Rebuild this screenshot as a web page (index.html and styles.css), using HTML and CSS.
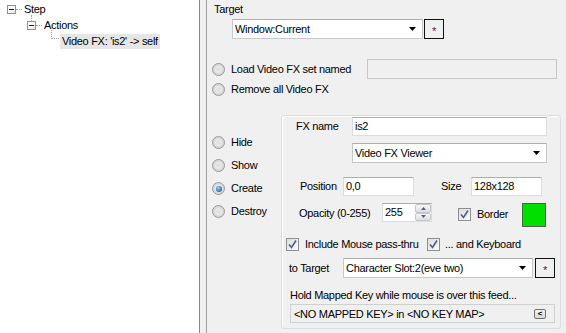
FILE: index.html
```html
<!DOCTYPE html>
<html lang="en">

<head>
    <meta charset="UTF-8">
    <title>Video FX</title>
    <link rel="stylesheet" href="styles.css">
</head>

<body>
    <div class="app">
        <div class="tree">
            <div class="node lvl0">
                <span class="exp"><i></i></span><span class="hdots"></span><span class="label">Step</span>
            </div>
            <div class="node lvl1">
                <span class="exp up"><i></i></span><span class="hdots"></span><span class="label">Actions</span>
            </div>
            <div class="node lvl2">
                <span class="elbow"></span><span class="label sel">Video FX: 'is2' -&gt; self</span>
            </div>
        </div>
        <div class="splitter"></div>

        <div class="panel">
            <div class="caption">Target</div>
            <div class="row target-row">
                <div class="combo w191"><span class="val">Window:Current</span><svg class="arrow" width="7" height="4"><polygon points="0,0 7,0 3.5,4" fill="#000"/></svg></div>
                <div class="star">*</div>
            </div>

            <div class="row load-row">
                <span class="radio"></span><span class="rtext load-text">Load Video FX set named</span>
                <div class="field off"></div>
            </div>
            <div class="row remove-row">
                <span class="radio"></span><span class="rtext">Remove all Video FX</span>
            </div>

            <div class="section">
                <div class="modes">
                    <div class="row mode"><span class="radio"></span><span class="rtext">Hide</span></div>
                    <div class="row mode"><span class="radio"></span><span class="rtext">Show</span></div>
                    <div class="row mode"><span class="radio on"><i></i></span><span class="rtext">Create</span></div>
                    <div class="row mode"><span class="radio"></span><span class="rtext">Destroy</span></div>
                </div>

                <div class="group">
                    <div class="row g-name">
                        <span class="lbl name-lbl">FX name</span>
                        <div class="field w195">is2</div>
                    </div>
                    <div class="row g-kind">
                        <div class="combo w195"><span class="val">Video FX Viewer</span><svg class="arrow" width="7" height="4"><polygon points="0,0 7,0 3.5,4" fill="#000"/></svg></div>
                    </div>
                    <div class="row g-pos">
                        <span class="lbl pos-lbl">Position</span>
                        <div class="field w71">0,0</div>
                        <span class="lbl size-lbl">Size</span>
                        <div class="field w71">128x128</div>
                    </div>
                    <div class="row g-opacity">
                        <span class="lbl op-lbl">Opacity (0-255)</span>
                        <div class="spin">
                            <span class="val">255</span>
                            <span class="spin-btns">
                                <span class="sb"><svg width="5" height="3"><polygon points="0,3 5,3 2.5,0" fill="#4d6185"/></svg></span>
                                <span class="sb"><svg width="5" height="3"><polygon points="0,0 5,0 2.5,3" fill="#4d6185"/></svg></span>
                            </span>
                        </div>
                        <span class="check on border-chk"><svg width="11" height="11"><path d="M2 5.5 L4.5 8.5 L9 1.5" fill="none" stroke="#4d5f86" stroke-width="1.6"/></svg></span>
                        <span class="ctext border-text">Border</span>
                        <span class="swatch"></span>
                    </div>
                    <div class="row g-pass">
                        <span class="check on"><svg width="11" height="11"><path d="M2 5.5 L4.5 8.5 L9 1.5" fill="none" stroke="#4d5f86" stroke-width="1.6"/></svg></span>
                        <span class="ctext pass-text">Include Mouse pass-thru</span>
                        <span class="check on"><svg width="11" height="11"><path d="M2 5.5 L4.5 8.5 L9 1.5" fill="none" stroke="#4d5f86" stroke-width="1.6"/></svg></span>
                        <span class="ctext kb-text">... and Keyboard</span>
                    </div>
                    <div class="row g-to">
                        <span class="lbl to-lbl">to Target</span>
                        <div class="combo w190"><span class="val">Character Slot:2(eve two)</span><svg class="arrow" width="7" height="4"><polygon points="0,0 7,0 3.5,4" fill="#000"/></svg></div>
                        <div class="star">*</div>
                    </div>
                    <div class="row g-hold">Hold Mapped Key while mouse is over this feed...</div>
                    <div class="row g-map">
                        <span class="val">&lt;NO MAPPED KEY&gt; in &lt;NO KEY MAP&gt;</span>
                        <span class="mini">&lt;</span>
                    </div>
                </div>
            </div>
        </div>
    </div>
</body>

</html>
```

FILE: styles.css
```css
*{
    margin:0;
    padding:0;
    box-sizing:border-box;
}
body{
    width:566px;
    height:333px;
    overflow:hidden;
    background:#f0f0f0;
    font-family:"Liberation Sans", Arial, sans-serif;
    font-size:11px;
    letter-spacing:-0.3px;
    color:#000;
}
.app{
    display:flex;
    height:333px;
}

/* tree */
.tree{
    width:200px;
    background:#fff;
    border-right:1px solid #828790;
    padding-top:1px;
}
.node{
    display:flex;
    align-items:center;
    height:16px;
}
.lvl0{ padding-left:7px; }
.lvl1{ padding-left:27px; }
.lvl2{ padding-left:51px; }
.exp{
    position:relative;
    display:flex;
    align-items:center;
    justify-content:center;
    width:9px;
    height:9px;
    border:1px solid #919191;
    background:linear-gradient(135deg,#fff 40%,#e2e2e2);
}
.exp i{
    width:5px;
    height:1px;
    background:#1e1e1e;
}
.exp.up::before{
    content:"";
    position:absolute;
    left:3px;
    top:-7px;
    height:6px;
    border-left:1px dotted #a0a0a0;
}
.hdots{
    width:6px;
    border-top:1px dotted #a0a0a0;
}
.label{
    padding:0 2px;
    line-height:15px;
}
.elbow{
    align-self:flex-start;
    width:8px;
    height:9px;
    margin-top:-3px;
    border-left:1px dotted #a0a0a0;
    border-bottom:1px dotted #a0a0a0;
    margin-right:1px;
}
.label.sel{
    background:#e6e6e6;
}

.splitter{
    width:7px;
    border-right:1px solid #a0a0a0;
}

/* right panel */
.panel{
    flex:1;
    padding:3px 0 0 5px;
}
.caption{
    padding-left:2px;
    line-height:13px;
}
.row{
    display:flex;
    align-items:center;
}
.target-row{
    margin-top:3px;
    padding-left:20px;
}
.combo{
    display:flex;
    align-items:center;
    justify-content:space-between;
    height:20px;
    background:#fff;
    border:1px solid #c5c9cf;
    border-top-color:#abadb3;
    padding:0 6px 0 2px;
}
.combo .arrow{ flex:none; }
.w191{ width:191px; }
.w195{ width:195px; }
.w190{ width:190px; }
.w71{ width:71px; }
.star{
    width:20px;
    height:20px;
    margin-left:1px;
    border:1px solid #111;
    text-align:center;
    line-height:22px;
    font-size:11px;
    color:#1c2d6e;
}

.field{
    height:19px;
    line-height:17px;
    padding-left:2px;
    background:#fff;
    border:1px solid #d9dde2;
    border-top-color:#abadb3;
}
.field.off{
    width:190px;
    height:20px;
    background:#f0f0f0;
    border-color:#c7c7c7;
}

.radio{
    display:flex;
    align-items:center;
    justify-content:center;
    width:13px;
    height:13px;
    border-radius:50%;
    border:1px solid #979797;
    background:radial-gradient(circle, #dcdcdc 0, #e8e8e8 3px, #d4d4d4 5px, #f6f6f6 6px);
}
.radio i{
    width:6px;
    height:6px;
    border-radius:50%;
    background:radial-gradient(circle at 40% 35%, #9bd0f5, #2a6cb0 70%, #174f86);
}
.rtext{
    margin-left:6px;
    line-height:13px;
}
.load-row{
    margin-top:20px;
    height:20px;
}
.load-text{ width:136px; }
.remove-row{
    margin-top:4px;
    height:13px;
}

.section{
    display:flex;
    margin-top:19px;
}
.modes{
    width:69px;
    padding-top:21px;
    display:flex;
    flex-direction:column;
    gap:10px;
}
.mode{ height:13px; }

.group{
    width:280px;
    border:1px solid #d5dfe5;
    border-radius:3px;
    box-shadow:inset 1px 1px 0 #fff;
    padding-bottom:5px;
}
.lbl{ line-height:13px; }
.g-name{
    margin-top:1px;
    height:19px;
    padding-left:14px;
}
.name-lbl{ width:56px; }
.g-kind{
    margin-top:7px;
    padding-left:70px;
}
.g-pos{
    margin-top:14px;
    height:19px;
    padding-left:18px;
}
.pos-lbl{ width:43px; }
.size-lbl{
    margin-left:27px;
    width:30px;
}
.g-opacity{
    margin-top:7px;
    height:24px;
    padding-left:17px;
    align-items:flex-start;
}
.op-lbl{
    width:83px;
    margin-top:4px;
}
.spin{
    display:flex;
    width:50px;
    height:19px;
    background:#fff;
    border:1px solid #d9dde2;
    border-top-color:#abadb3;
    padding-left:2px;
    line-height:17px;
}
.spin .val{ flex:1; }
.spin-btns{
    display:flex;
    flex-direction:column;
    width:16px;
}
.sb{
    flex:1;
    display:flex;
    align-items:center;
    justify-content:center;
    border:1px solid #c3c6cb;
    border-radius:2px;
    background:linear-gradient(#f6f6f6,#dedede);
}
.check{
    display:flex;
    align-items:center;
    justify-content:center;
    width:13px;
    height:13px;
    border:1px solid #8e8f8f;
    background:linear-gradient(135deg,#dcdcdc,#fbfbfb);
}
.border-chk{
    margin-left:26px;
    margin-top:5px;
}
.ctext{
    margin-left:6px;
    line-height:13px;
}
.border-text{
    width:45px;
    margin-top:5px;
}
.swatch{
    width:24px;
    height:24px;
    background:#00e000;
    border:1px solid #5a5a5a;
}
.g-pass{
    margin-top:11px;
    height:13px;
    padding-left:4px;
}
.pass-text{ width:122px; }
.kb-text{ margin-left:5px; }
.g-to{
    margin-top:7px;
    height:20px;
    padding-left:7px;
}
.to-lbl{ width:54px; }
.g-to .star{ margin-left:2px; }
.g-hold{
    margin-top:11px;
    height:13px;
    padding-left:8px;
    line-height:13px;
}
.g-map{
    margin:2px 0 0 8px;
    width:265px;
    height:19px;
    border:1px solid #d0d0d0;
    padding:0 8px 0 3px;
    justify-content:space-between;
}
.mini{
    width:12px;
    height:10px;
    border:1px solid #707070;
    border-radius:2px;
    background:linear-gradient(#f4f4f4,#dadada);
    font-size:8px;
    line-height:8px;
    text-align:center;
    font-weight:bold;
}
```
